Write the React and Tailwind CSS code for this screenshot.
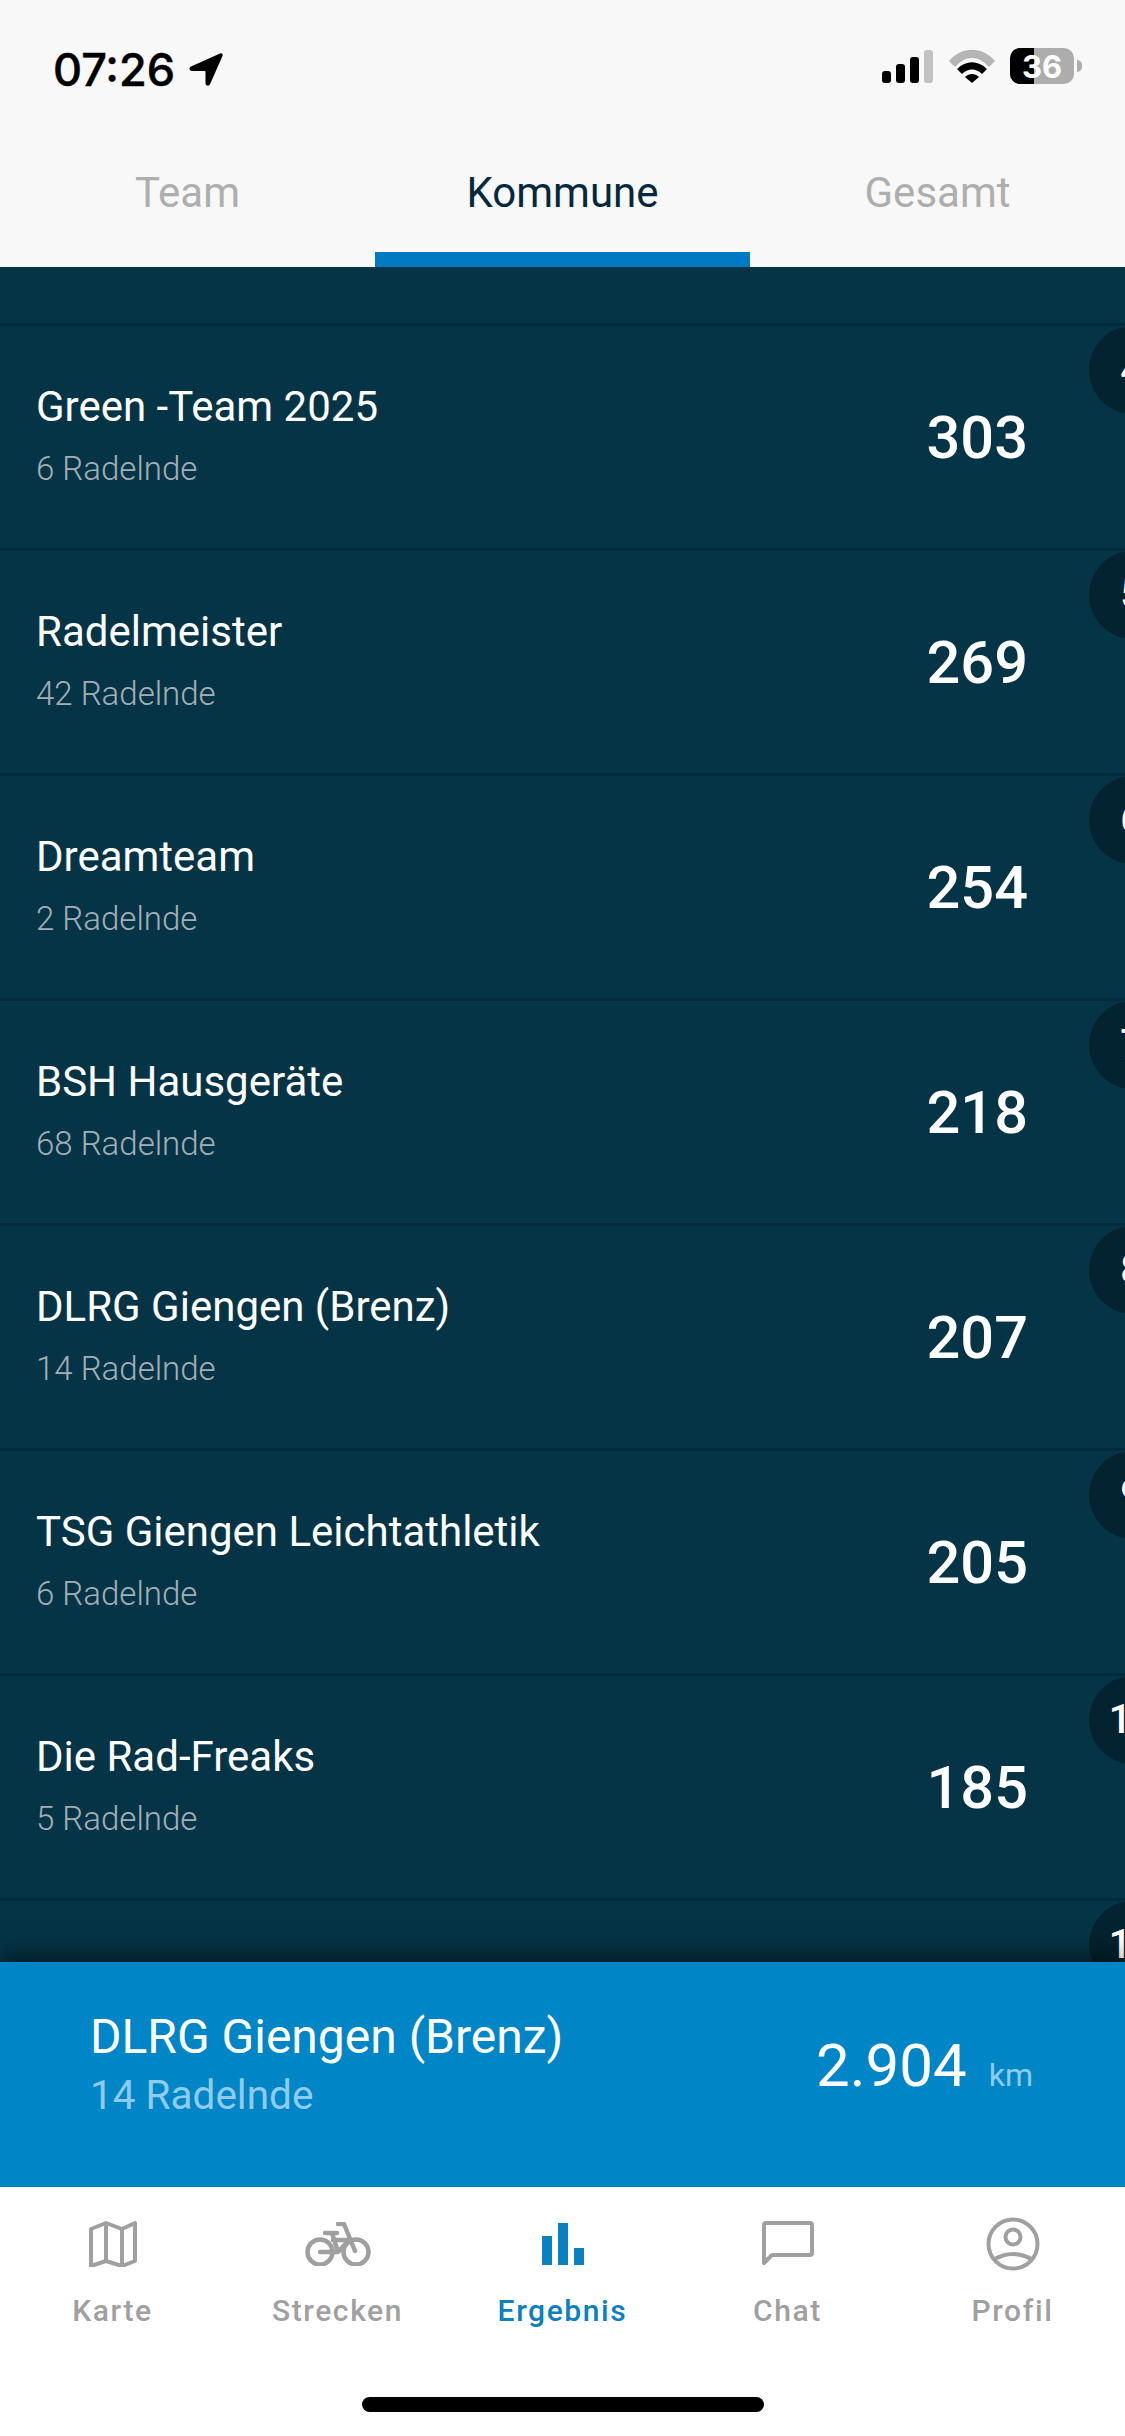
import React from 'react'

const rows = [
    { rank: 4, name: 'Green -Team 2025', riders: '6 Radelnde', km: 303 },
    { rank: 5, name: 'Radelmeister', riders: '42 Radelnde', km: 269 },
    { rank: 6, name: 'Dreamteam', riders: '2 Radelnde', km: 254 },
    { rank: 7, name: 'BSH Hausgeräte', riders: '68 Radelnde', km: 218 },
    { rank: 8, name: 'DLRG Giengen (Brenz)', riders: '14 Radelnde', km: 207 },
    { rank: 9, name: 'TSG Giengen Leichtathletik', riders: '6 Radelnde', km: 205 },
    { rank: 10, name: 'Die Rad-Freaks', riders: '5 Radelnde', km: 185 },
]

function StatusBar() {
    return (
        <div className="h-[96px] pt-[48px] pl-[53px] pr-[43px] flex items-start justify-between">
            <div className="flex items-center gap-[13px]">
                <span className="font-['Inter',sans-serif] text-[45px] leading-[44px] font-medium text-black [-webkit-text-stroke:0.5px_black]">07:26</span>
                <svg width="36" height="36" viewBox="0 0 36 36">
                    <path d="M32 1.5 3 14.5c-2.5 1.3-1.6 4.5 1 4.5h12.5c.5 0 1 .4 1 1V31c0 3 3.4 3.6 4.6 1L34.500 4c.8-1.800-.8-3.300-2.500-2.500z" fill="#000" />
                </svg>
            </div>
            <div className="flex items-center">
                <svg width="52" height="33" viewBox="0 0 52 33" className="mr-[15px]">
                    <rect x="0" y="21" width="9" height="12" rx="3" fill="#000" />
                    <rect x="14" y="14" width="9" height="19" rx="3" fill="#000" />
                    <rect x="28" y="7" width="9" height="26" rx="3" fill="#000" />
                    <rect x="42" y="0" width="9" height="33" rx="3" fill="#c2c2c2" />
                </svg>
                <svg width="46" height="34" viewBox="0 0 46 34" className="mr-[15px]">
                    <path d="M0 12C13-3 33-3 46 12l-6 6C29 6 17 6 6 18z" fill="#b5b5b5" />
                    <path d="M8 20c9-9 21-9 30 0l-5 5c-6-6-14-6-20 0z" fill="#000" />
                    <path d="M16 28c4-4 10-4 14 0l-7 6z" fill="#000" />
                </svg>
                <div className="relative w-[64px] h-[36px] rounded-[10px] overflow-hidden bg-[#adadad]">
                    <div className="w-[24px] h-full bg-black" />
                    <span className="absolute inset-0 flex items-center justify-center font-['Inter',sans-serif] text-[31px] leading-none font-bold text-white">36</span>
                </div>
                <div className="w-[5px] h-[12px] ml-[3px] rounded-r-full bg-[#adadad]" />
            </div>
        </div>
    )
}

function Tabs() {
    return (
        <div className="grid grid-cols-3 h-[171px] font-['Roboto',sans-serif] text-[42px] leading-[48px]">
            <div className="flex items-start justify-center pt-[73px] text-[#aeaeae]">Team</div>
            <div className="flex items-start justify-center pt-[73px] text-[#04293d] border-b-[15px] border-[#0079c1]">Kommune</div>
            <div className="flex items-start justify-center pt-[73px] text-[#aeaeae]">Gesamt</div>
        </div>
    )
}

function RankBadge({ rank }) {
    return (
        <div className="absolute left-[1089px] top-0 w-[88px] h-[88px] pr-[3px] rounded-full bg-[#02232f] flex items-center justify-center text-[40px] font-medium text-white">{rank}</div>
    )
}

function Row({ rank, name, riders, km }) {
    return (
        <div className="relative h-[225px] border-t-[3px] border-[#032a3c] flex items-center justify-between pl-[36px] pr-[97px]">
            <div className="-mt-[4px]">
                <div className="text-[42px] leading-[48px] text-white">{name}</div>
                <div className="mt-[19px] text-[33px] leading-[38px] font-light text-[#a3afb5]">{riders}</div>
            </div>
            <div className="text-[59.5px] mt-[3px] font-medium text-white">{km}</div>
            <RankBadge rank={rank} />
        </div>
    )
}

function NavItem({ label, active, children }) {
    return (
        <div className="flex flex-col items-center">
            <div className="h-[60px] flex items-center justify-center">{children}</div>
            <div className={`mt-[20px] text-[30px] leading-[34px] tracking-[1.6px] font-medium ${active ? 'text-[#0a80c0]' : 'text-[#a0a0a0]'}`}>{label}</div>
        </div>
    )
}

function BottomNav() {
    return (
        <div className="h-[249px] bg-white relative font-['Roboto',sans-serif]">
            <div className="grid grid-cols-5 pt-[27px]">
                <NavItem label="Karte">
                    <svg width="48" height="46" viewBox="0 0 48 46" fill="none" stroke="#a0a0a0" strokeWidth="4" strokeLinejoin="round">
                        <path d="M2 8 17 2l16 6 13-6v38l-13 5-16-5-15 5z" />
                        <path d="M17 2v38M33 8v37" />
                    </svg>
                </NavItem>
                <NavItem label="Strecken">
                    <svg width="66" height="44" viewBox="0 0 66 44" fill="none" stroke="#a0a0a0" strokeWidth="4.500" strokeLinejoin="round" strokeLinecap="round">
                        <circle cx="15" cy="30" r="12.500" />
                        <circle cx="51" cy="30" r="12.500" />
                        <path d="M15 30h18l11-12M20 11h12M27 11l6 19M28 18h16M33 2h6l11 27" />
                    </svg>
                </NavItem>
                <NavItem label="Ergebnis" active>
                    <svg width="42" height="42" viewBox="0 0 42 42" fill="#0a80c0">
                        <rect x="0" y="13" width="10" height="29" />
                        <rect x="16" y="0" width="10" height="42" />
                        <rect x="32" y="25" width="10" height="17" />
                    </svg>
                </NavItem>
                <NavItem label="Chat">
                    <svg width="54" height="48" viewBox="0 0 54 48" fill="none" stroke="#a0a0a0" strokeWidth="4" strokeLinejoin="round">
                        <path d="M5 3h44a2 2 0 0 1 2 2v28a2 2 0 0 1-2 2H11l-8 8V5a2 2 0 0 1 2-2z" />
                    </svg>
                </NavItem>
                <NavItem label="Profil">
                    <svg width="54" height="54" viewBox="0 0 54 54" fill="none" stroke="#a0a0a0" strokeWidth="4">
                        <circle cx="27" cy="27" r="24.500" />
                        <circle cx="27" cy="20" r="7.500" />
                        <path d="M7 43Q27 31 47 43" />
                    </svg>
                </NavItem>
            </div>
            <div className="absolute left-[362px] top-[210px] w-[402px] h-[15px] rounded-full bg-black" />
        </div>
    )
}

export default function App() {
    return (
        <div className="w-[1125px] h-[2436px] flex flex-col overflow-hidden bg-[#053447]">
            <div className="bg-[#f8f8f8]">
                <StatusBar />
                <Tabs />
            </div>
            <div className="flex-1 overflow-hidden pt-[56px] font-['Roboto',sans-serif]">
                {rows.map((r) => <Row key={r.rank} {...r} />)}
                <div className="relative h-[225px] border-t-[3px] border-[#032a3c]">
                    <RankBadge rank={11} />
                </div>
            </div>
            <div className="relative h-[225px] bg-[#0085c7] shadow-[0_-6px_24px_rgba(0,0,0,0.55)] flex items-center justify-between pl-[90px] pr-[92px] pb-[13px] font-['Roboto',sans-serif]">
                <div className="-mt-[8px]">
                    <div className="text-[48px] leading-[56px] text-white">DLRG Giengen (Brenz)</div>
                    <div className="mt-[6px] text-[40.5px] leading-[48px] text-[#8fcbec]">14 Radelnde</div>
                </div>
                <div className="flex items-baseline gap-[22px] pb-[4px]">
                    <span className="text-[60px] text-white">2.904</span>
                    <span className="text-[32px] text-[#8fcbec]">km</span>
                </div>
            </div>
            <BottomNav />
        </div>
    )
}
